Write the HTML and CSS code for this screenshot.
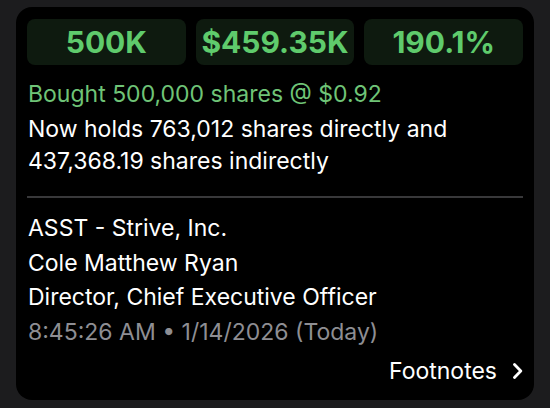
FILE: index.html
```html
<!DOCTYPE html>
<html lang="en">
<head>
<meta charset="UTF-8">
<meta name="viewport" content="width=device-width,initial-scale=1.0">
<title>Insider trade</title>
<link rel="stylesheet" href="styles.css">
</head>
<body>
<div class="card">
    <div class="stats">
        <div class="stat">500K</div>
        <div class="stat">$459.35K</div>
        <div class="stat">190.1%</div>
    </div>

    <p class="bought">Bought 500,000 shares @ $0.92</p>
    <p class="holds">Now holds 763,012 shares directly and<br>437,368.19 shares indirectly</p>

    <div class="divider"></div>

    <div class="meta">
        <div>ASST - Strive, Inc.</div>
        <div>Cole Matthew Ryan</div>
        <div>Director, Chief Executive Officer</div>
        <div class="time">8:45:26 AM &bull; 1/14/2026 (Today)</div>
    </div>

    <div class="footer-row">
        <a class="footnotes" href="#">Footnotes
            <svg class="chevron" width="11" height="16" viewBox="0 0 11 16">
                <path d="M2.5 1.5 L8.8 8 L2.5 14.5" fill="none" stroke="#fff" stroke-width="2.8" stroke-linecap="round" stroke-linejoin="round"/>
            </svg>
        </a>
    </div>
</div>
</body>
</html>
```

FILE: styles.css
```css
body {
    margin: 0;
    padding: 7px 16px 12px 16px;
    background: #1c1c1e;
    font-family: "Inter", "Liberation Sans", sans-serif;
    color: #fff;
}

.card {
    background: #000;
    border-radius: 16px;
    padding: 12px 11px 12px 11px;
}

.stats {
    display: grid;
    grid-template-columns: repeat(3, 1fr);
    gap: 10px;
}

.stat {
    height: 46px;
    display: flex;
    justify-content: center;
    align-items: center;
    background: #0e1a0f;
    border-radius: 8px;
    color: #5fcb6c;
    font-size: 30px;
    font-weight: 700;
}

.bought {
    margin: 13px 0 0 1px;
    font-size: 23px;
    line-height: 33px;
    color: #6fc477;
}

.holds {
    margin: 2px 0 0 1px;
    font-size: 23px;
    line-height: 32px;
}

.divider {
    height: 2px;
    background: #38383a;
    margin: 19px 0 0 0;
}

.meta {
    margin: 13px 0 0 1px;
    font-size: 23px;
    line-height: 34.5px;
}

.time {
    color: #8e8e93;
}

.footer-row {
    display: flex;
    justify-content: flex-end;
    margin-top: 5px;
}

.footnotes {
    display: flex;
    align-items: center;
    gap: 15px;
    color: #fff;
    text-decoration: none;
    font-size: 23px;
    line-height: 34px;
}
```
